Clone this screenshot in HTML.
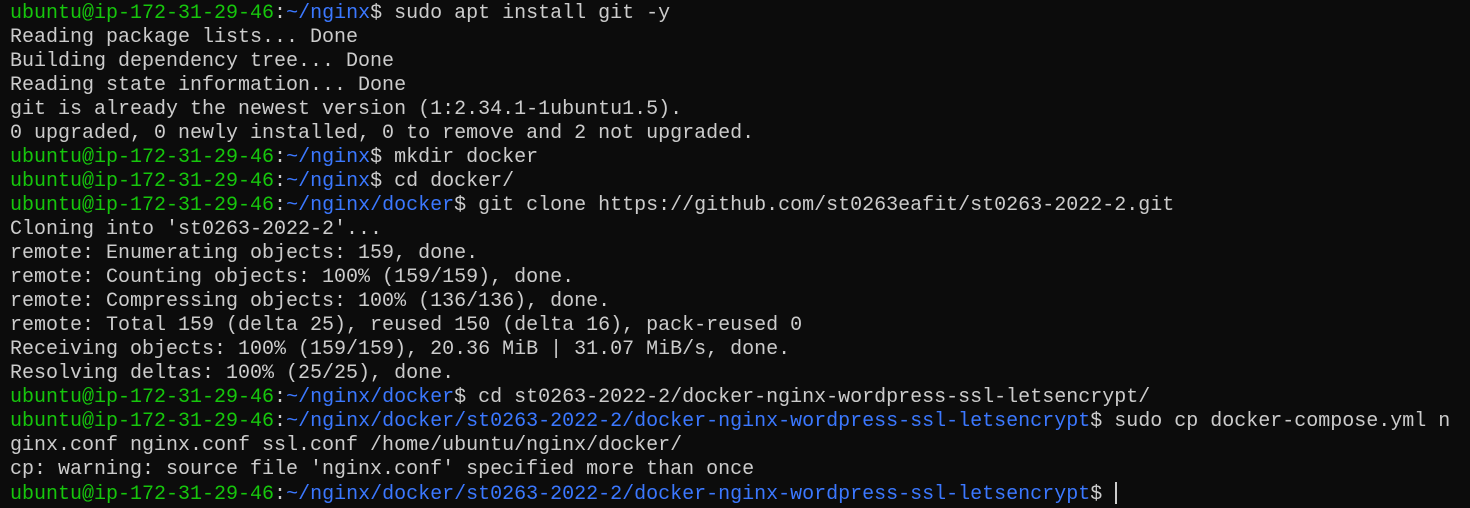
<!DOCTYPE html>
<html><head><meta charset="utf-8"><style>
html,body{margin:0;padding:0;background:#0c0c0c;width:1470px;height:508px;overflow:hidden}
pre{margin:0;padding:2px 0 0 10px;font-family:"Liberation Mono",monospace;font-size:20px;line-height:24px;color:#cccccc;white-space:pre}
.g{color:#16c60c}.b{color:#3b78ff}
.c{display:inline-block;width:2px;height:22px;background:#cccccc;vertical-align:-5px;margin-left:1px}
</style></head><body><pre><span class="g">ubuntu@ip-172-31-29-46</span>:<span class="b">~/nginx</span>$ sudo apt install git -y
Reading package lists... Done
Building dependency tree... Done
Reading state information... Done
git is already the newest version (1:2.34.1-1ubuntu1.5).
0 upgraded, 0 newly installed, 0 to remove and 2 not upgraded.
<span class="g">ubuntu@ip-172-31-29-46</span>:<span class="b">~/nginx</span>$ mkdir docker
<span class="g">ubuntu@ip-172-31-29-46</span>:<span class="b">~/nginx</span>$ cd docker/
<span class="g">ubuntu@ip-172-31-29-46</span>:<span class="b">~/nginx/docker</span>$ git clone https://github.com/st0263eafit/st0263-2022-2.git
Cloning into 'st0263-2022-2'...
remote: Enumerating objects: 159, done.
remote: Counting objects: 100% (159/159), done.
remote: Compressing objects: 100% (136/136), done.
remote: Total 159 (delta 25), reused 150 (delta 16), pack-reused 0
Receiving objects: 100% (159/159), 20.36 MiB | 31.07 MiB/s, done.
Resolving deltas: 100% (25/25), done.
<span class="g">ubuntu@ip-172-31-29-46</span>:<span class="b">~/nginx/docker</span>$ cd st0263-2022-2/docker-nginx-wordpress-ssl-letsencrypt/
<span class="g">ubuntu@ip-172-31-29-46</span>:<span class="b">~/nginx/docker/st0263-2022-2/docker-nginx-wordpress-ssl-letsencrypt</span>$ sudo cp docker-compose.yml n
ginx.conf nginx.conf ssl.conf /home/ubuntu/nginx/docker/
cp: warning: source file 'nginx.conf' specified more than once
<span class="g">ubuntu@ip-172-31-29-46</span>:<span class="b">~/nginx/docker/st0263-2022-2/docker-nginx-wordpress-ssl-letsencrypt</span>$ <span class="c"></span></pre></body></html>
